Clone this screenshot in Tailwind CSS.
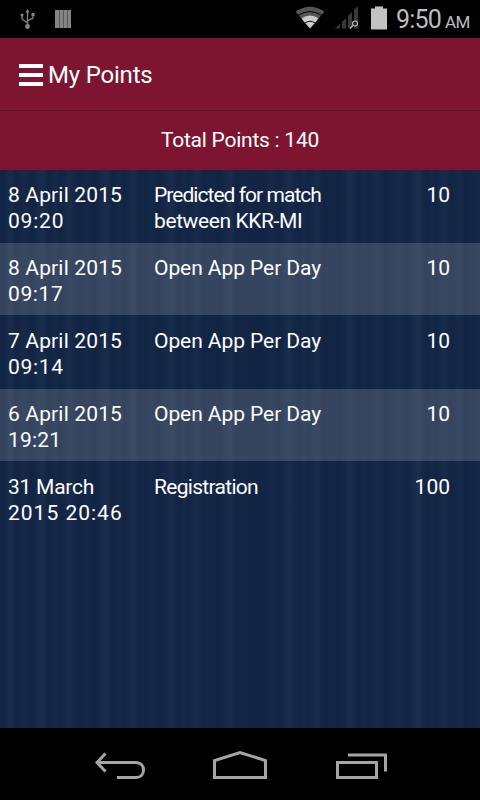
<!DOCTYPE html>
<html lang="en">
<head>
<meta charset="utf-8">
<title>My Points</title>
<script src="https://cdn.jsdelivr.net/npm/@tailwindcss/browser@4"></script>
</head>
<body class="w-[480px] h-[800px] overflow-hidden bg-black flex flex-col text-white font-['Roboto',sans-serif] whitespace-nowrap">
<div class="h-[38px] shrink-0 flex items-center justify-between bg-black">
  <svg width="80" height="38" fill="none" stroke="#858585" stroke-width="1.3">
    <path d="M27.5 12V27M22 15v4l5.500 4M33 15v3l-5.500 3"/>
    <path d="M27.500 9l2 3.500h-4zM31.500 13h3v3h-3z" fill="#858585" stroke="none"/>
    <circle cx="22" cy="15" r="1.500" fill="#858585" stroke="none"/><circle cx="27.500" cy="26.500" r="2.400" fill="#858585" stroke="none"/>
    <path d="M55 10h16v18H55z" fill="#858585" stroke="none"/><path d="M59.500 10v18M63.500 10v18M67.500 10v18" stroke="#555" stroke-width="1"/>
  </svg>
  <div class="flex items-center pr-[10px]">
    <svg width="100" height="38">
      <path d="M5.500 11.500Q20 2 34.500 11.500L20 28.500z" fill="#555"/>
      <path d="M13 20.500Q20 15 27 20.500L20 28.500z" fill="#ccc"/>
      <path d="M12.500 19.500Q20 14.500 27.500 19.500" fill="none" stroke="#ccc" stroke-width="3"/>
      <path d="M8 15.500Q20 7.500 32 15.500M15 23Q20 19.500 25 23" fill="none" stroke="#000" stroke-width="1"/>
      <path d="M45 28.500l5-5v5zM52 22l4-4v10.500h-4zM58 16l4-4v16.500h-4zM64 10l4-4v22.500h-4z" fill="#383838"/>
      <circle cx="65" cy="23.500" r="2.500" fill="#222" stroke="#bbb" stroke-width="1.100"/><path d="M63 25.500l-3 3" stroke="#bbb" stroke-width="1.200"/>
      <path d="M81 8.500h4v-2h8v2h4v21h-16z" fill="#c2c2c2"/>
    </svg>
    <div class="w-[80px] pl-[6px] flex items-baseline text-[#bdbdbd] leading-[38px] pt-[4px]"><span class="text-[25px] tracking-[-0.8px]">9:50</span><span class="text-[17px] tracking-[-0.5px] ml-[4px]">AM</span></div>
  </div>
</div>
<header class="h-[72px] shrink-0 bg-[#7d1531] flex items-center pl-[19px]">
  <div class="w-[24px] flex flex-col gap-[5px] mt-[1px]"><i class="h-1 bg-white"></i><i class="h-1 bg-white"></i><i class="h-1 bg-white"></i></div>
  <h1 class="text-[24px] leading-[30px] ml-[5px] mt-[1px] tracking-[-0.2px]">My Points</h1>
</header>
<div class="h-[60px] shrink-0 bg-[#7d1531] border-t border-[#641027] flex items-center justify-center text-[21px] tracking-[-0.25px]">Total Points : 140</div>
<main class="h-[558px] shrink-0 bg-[#112444] bg-[linear-gradient(90deg,#112444_4px,#1a2c4b_10px,#112444_16px,#162948_24px,#112444_32px,#1a2d4c_42px,#112444_49px,#152847_55px,#112444_61px,#182b4a_70px,#112444_78px,#142746_87px,#112444_95px,#1a2d4c_106px,#112444_113px,#152847_119px,#112444_125px,#1a2c4b_133px,#112444_140px,#142746_152px,#112444_158px,#192c4b_172px,#112444_179px,#152847_184px,#112444_189px,#182b4a_197px,#112444_205px,#132645_212px,#112444_220px,#1a2d4c_231px,#112444_236px,#132645_245px,#112444_261px,#152847_271px,#112444_280px,#192c4b_289px,#112444_298px,#152847_304px,#112444_309px,#182b4a_317px,#112444_323px,#132645_331px,#112444_340px,#192c4b_350px,#112444_359px,#152847_364px,#112444_369px,#172a49_377px,#112444_385px,#162948_400px,#112444_407px,#1b2e4d_418px,#112444_426px,#152847_432px,#112444_436px,#182b4a_445px,#112444_451px,#172a49_459px,#112444_465px,#142746_480px)] text-[21px] leading-[26px]">
  <section class="h-[73px] pt-[12px] pl-2 pr-[30px] grid grid-cols-[146px_1fr_auto]"><div><p class="tracking-[0.15px]">8 April 2015</p><p class="tracking-[0.8px]">09:20</p></div><div><p class="tracking-[-0.96px]">Predicted for match</p><p class="tracking-[-0.4px]">between KKR-MI</p></div><p>10</p></section>
  <section class="h-[72px] mb-px bg-white/15 pt-[12px] pl-2 pr-[30px] grid grid-cols-[146px_1fr_auto]"><div><p class="tracking-[0.15px]">8 April 2015</p><p class="tracking-[0.6px]">09:17</p></div><p class="tracking-[-0.07px]">Open App Per Day</p><p>10</p></section>
  <section class="h-[73px] pt-[12px] pl-2 pr-[30px] grid grid-cols-[146px_1fr_auto]"><div><p class="tracking-[0.15px]">7 April 2015</p><p class="tracking-[0.7px]">09:14</p></div><p class="tracking-[-0.07px]">Open App Per Day</p><p>10</p></section>
  <section class="h-[72px] mb-px bg-white/15 pt-[12px] pl-2 pr-[30px] grid grid-cols-[146px_1fr_auto]"><div><p class="tracking-[0.15px]">6 April 2015</p><p class="tracking-[0.2px]">19:21</p></div><p class="tracking-[-0.07px]">Open App Per Day</p><p>10</p></section>
  <section class="h-[73px] pt-[12px] pl-2 pr-[30px] grid grid-cols-[146px_1fr_auto]"><div><p class="tracking-[-0.25px]">31 March</p><p class="tracking-[1px]">2015 20:46</p></div><p class="tracking-[-0.7px]">Registration</p><p>100</p></section>
</main>
<nav class="h-[72px] shrink-0 bg-black">
  <svg width="480" height="72" fill="none" stroke="#a5a5a5" stroke-width="3">
    <path d="M97 34.500H136C146 34.500 146 49.500 136 49.500H117M105.500 25.500L97 34.500L105.500 43.500"/>
    <path d="M214.500 49.500V32.500L240 24.500L265.500 32.500V49.500z"/>
    <path d="M337.500 34.500H376.500V49.500H337.500zM348 27H385.500V43.500"/>
  </svg>
</nav>
</body>
</html>
